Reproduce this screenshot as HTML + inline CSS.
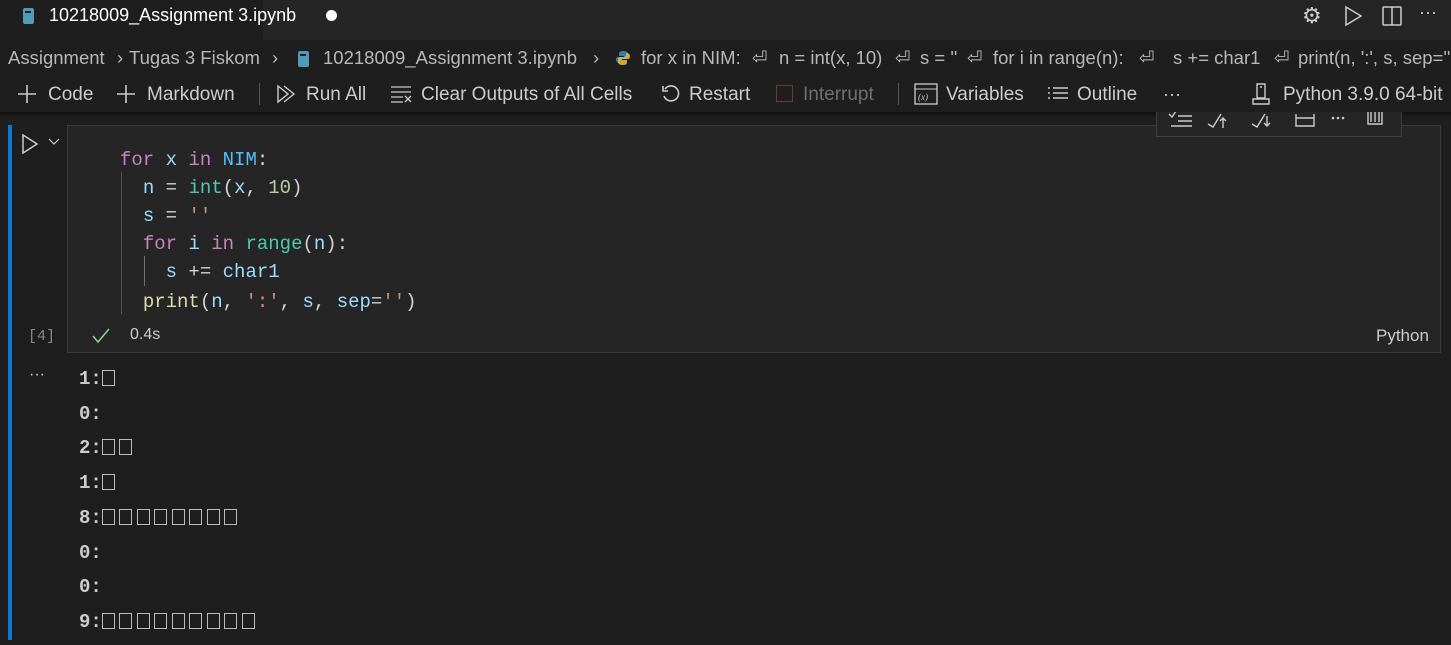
<!DOCTYPE html>
<html><head><meta charset="utf-8"><style>
*{margin:0;padding:0;box-sizing:border-box}
body{width:1451px;height:645px;background:#1e1e1e;overflow:hidden;position:relative;font-family:"Liberation Sans",sans-serif;color:#ccc}
.a{position:absolute;white-space:nowrap}
.ui{font-size:18px;color:#cccccc}
.bc{position:absolute;white-space:nowrap;top:47px;font-size:18.5px;color:#b8b8b8}
.mono{font-family:"Liberation Mono",monospace;font-size:19px}
.k{color:#c586c0}.v{color:#9cdcfe}.c{color:#4fc1ff}.f{color:#4ec9b0}.n{color:#b5cea8}.s{color:#ce9178}.y{color:#dcdcaa}.w{color:#d4d4d4}
.bx{display:inline-block;width:13px;height:16px;border:1.5px solid #bbb;margin-right:4.5px;vertical-align:-2px}
</style></head><body>
<div class="a" style="left:0;top:0;width:1451px;height:40px;background:#252526"></div>
<div class="a" style="left:0;top:0;width:263px;height:40px;background:#1e1e1e"></div>
<svg class="a" style="left:22px;top:7px" width="14" height="18"><rect x="1" y="1" width="11" height="16" rx="2" fill="#519aba"/><rect x="3" y="4" width="6" height="2" fill="#1e1e1e"/></svg>
<div class="a ui" style="left:49px;top:5px;color:#fff">10218009_Assignment 3.ipynb</div>
<div class="a" style="left:326px;top:10px;width:11px;height:11px;border-radius:50%;background:#fff"></div>
<div class="a" style="left:1302px;top:3px;font-size:22px;color:#ccc">⚙</div>
<svg class="a" style="left:1342px;top:5px" width="22" height="22"><path d="M4 2 L19 11 L4 20 Z" fill="none" stroke="#ccc" stroke-width="1.5"/></svg>
<svg class="a" style="left:1381px;top:5px" width="22" height="22"><rect x="2" y="2" width="18" height="18" rx="1" fill="none" stroke="#ccc" stroke-width="1.5"/><line x1="11" y1="2" x2="11" y2="20" stroke="#ccc" stroke-width="1.5"/></svg>
<div class="a ui" style="left:1419px;top:2px;font-size:18px">···</div>
<div class="bc" style="left:8px">Assignment</div>
<div class="bc" style="left:117px">›</div>
<div class="bc" style="left:129px">Tugas 3 Fiskom</div>
<div class="bc" style="left:272px">›</div>
<svg class="a" style="left:297px;top:50px" width="14" height="18"><rect x="1" y="1" width="11" height="16" rx="2" fill="#519aba"/><rect x="3" y="4" width="6" height="2" fill="#1e1e1e"/></svg>
<div class="bc" style="left:323px">10218009_Assignment 3.ipynb</div>
<div class="bc" style="left:593px">›</div>
<svg class="a" style="left:615px;top:50px" width="16" height="16"><path d="M8 1C4 1 4 3 4 4v2h5v1H3C1 7 1 9 1 10s1 3 3 3h1v-2c0-1 1-2 2-2h4c1 0 2-1 2-2V4c0-2-2-3-5-3z" fill="#3a78b0"/><path d="M8 15c4 0 4-2 4-3v-2H7V9h6c2 0 2-2 2-3s-1-3-3-3h-1v2c0 1-1 2-2 2H5c-1 0-2 1-2 2v3c0 2 2 3 5 3z" fill="#d8b84a" opacity=".9"/></svg>
<div class="bc" style="left:641px">for x in NIM:</div>
<div class="bc" style="left:752px">⏎</div>
<div class="bc" style="left:779px">n = int(x, 10)</div>
<div class="bc" style="left:895px">⏎</div>
<div class="bc" style="left:920px">s = ''</div>
<div class="bc" style="left:967px">⏎</div>
<div class="bc" style="left:993px">for i in range(n):</div>
<div class="bc" style="left:1139px">⏎</div>
<div class="bc" style="left:1173px">s += char1</div>
<div class="bc" style="left:1274px">⏎</div>
<div class="bc" style="left:1298px">print(n, ':', s, sep=''</div>
<div class="a" style="left:0;top:112px;width:1451px;height:6px;background:linear-gradient(#111,#1e1e1e)"></div>
<svg class="a" style="left:17px;top:84px" width="20" height="20"><path d="M10 1v18M1 10h18" stroke="#ccc" stroke-width="1.6"/></svg>
<div class="a ui" style="left:48px;top:84px;font-size:19px">Code</div>
<svg class="a" style="left:116px;top:84px" width="20" height="20"><path d="M10 1v18M1 10h18" stroke="#ccc" stroke-width="1.6"/></svg>
<div class="a ui" style="left:147px;top:84px;font-size:19px">Markdown</div>
<div class="a" style="left:259px;top:83px;width:1px;height:22px;background:#555"></div>
<svg class="a" style="left:276px;top:84px" width="22" height="20"><path d="M2 2L12 10L2 18Z M8 2L18 10L8 18" fill="none" stroke="#ccc" stroke-width="1.4"/></svg>
<div class="a ui" style="left:306px;top:84px;font-size:19px">Run All</div>
<svg class="a" style="left:390px;top:85px" width="24" height="18"><path d="M1 2h20M1 7h20M1 12h12M1 17h12M15 11l6 6M21 11l-6 6" stroke="#ccc" stroke-width="1.3"/></svg>
<div class="a ui" style="left:421px;top:84px;font-size:19px">Clear Outputs of All Cells</div>
<svg class="a" style="left:661px;top:84px" width="20" height="20"><path d="M4 5A7.5 7.5 0 1 1 3 12" fill="none" stroke="#ccc" stroke-width="1.6"/><path d="M2 2v5h5" fill="none" stroke="#ccc" stroke-width="1.6"/></svg>
<div class="a ui" style="left:689px;top:84px;font-size:19px">Restart</div>
<div class="a" style="left:776px;top:85px;width:17px;height:17px;border:1.5px solid #6b3a3a"></div>
<div class="a ui" style="left:803px;top:84px;color:#6f6f6f;font-size:19px">Interrupt</div>
<div class="a" style="left:898px;top:83px;width:1px;height:22px;background:#555"></div>
<svg class="a" style="left:914px;top:83px" width="24" height="22"><rect x="1" y="1" width="22" height="20" fill="none" stroke="#ccc" stroke-width="1.3"/><line x1="1" y1="6" x2="23" y2="6" stroke="#ccc"/><text x="4" y="17" font-size="9" fill="#ccc" font-family="Liberation Serif" font-style="italic">(x)</text></svg>
<div class="a ui" style="left:946px;top:84px;font-size:19px">Variables</div>
<svg class="a" style="left:1047px;top:86px" width="22" height="16"><path d="M1 2h2M6 2h15M1 7h2M6 7h15M1 12h2M6 12h15" stroke="#ccc" stroke-width="1.5"/></svg>
<div class="a ui" style="left:1077px;top:84px;font-size:19px">Outline</div>
<div class="a ui" style="left:1163px;top:84px">···</div>
<svg class="a" style="left:1250px;top:82px" width="22" height="24"><path d="M7 2h8v14H7z M3 17h16v5H3z M10 5h2" fill="none" stroke="#ccc" stroke-width="1.4"/></svg>
<div class="a ui" style="left:1283px;top:84px;font-size:19px">Python 3.9.0 64-bit</div>
<div class="a" style="left:8px;top:125px;width:4px;height:515px;background:#0a7ad3"></div>
<div class="a" style="left:67px;top:125px;width:1374px;height:228px;background:#252526;border:1px solid #3a3a3a"></div>
<svg class="a" style="left:20px;top:133px" width="20" height="22"><path d="M3 2L17 11L3 20Z" fill="none" stroke="#ccc" stroke-width="1.5"/></svg>
<svg class="a" style="left:48px;top:137px" width="12" height="10"><path d="M1 2l5 5 5-5" fill="none" stroke="#ccc" stroke-width="1.2"/></svg>
<div class="a" style="left:1156px;top:112px;width:246px;height:25px;background:#252526;border:1px solid #3f3f3f;border-top:none"></div>
<svg class="a" style="left:1156px;top:112px" width="246" height="20">
<g fill="none" stroke="#ccc" stroke-width="1.4">
<path d="M13 2l3 3 4-6M22 4h14M22 9h14M15 14h21"/>
<path d="M52 12l5 3 8-13M67 6v10M64 9l3-3 3 3"/>
<path d="M96 12l5 3 8-13M111 4v10M108 11l3 3 3-3"/>
<path d="M140 2v12h18V2M140 6h18"/>
<path d="M212 -1v13h14V-1M215 0v10M219 0v10M223 0v10"/>
</g>
<g fill="#ccc"><circle cx="177" cy="6" r="1.3"/><circle cx="182" cy="6" r="1.3"/><circle cx="187" cy="6" r="1.3"/></g>
</svg>
<div class="a" style="left:121px;top:172px;width:1px;height:142px;background:#555"></div>
<div class="a" style="left:144px;top:256px;width:1px;height:30px;background:#707070"></div>
<div class="a mono" style="left:120px;top:146px;line-height:28px">
<div><span class="k">for</span> <span class="v">x</span> <span class="k">in</span> <span class="c">NIM</span><span class="w">:</span></div>
<div>&nbsp;&nbsp;<span class="v">n</span> <span class="w">=</span> <span class="f">int</span><span class="w">(</span><span class="v">x</span><span class="w">, </span><span class="n">10</span><span class="w">)</span></div>
<div>&nbsp;&nbsp;<span class="v">s</span> <span class="w">=</span> <span class="s">''</span></div>
<div>&nbsp;&nbsp;<span class="k">for</span> <span class="v">i</span> <span class="k">in</span> <span class="f">range</span><span class="w">(</span><span class="v">n</span><span class="w">):</span></div>
<div>&nbsp;&nbsp;&nbsp;&nbsp;<span class="v">s</span> <span class="w">+=</span> <span class="v">char1</span></div>
<div style="margin-top:2px">&nbsp;&nbsp;<span class="y">print</span><span class="w">(</span><span class="v">n</span><span class="w">, </span><span class="s">':'</span><span class="w">, </span><span class="v">s</span><span class="w">, </span><span class="v">sep</span><span class="w">=</span><span class="s">''</span><span class="w">)</span></div>
</div>
<div class="a" style="left:28px;top:328px;font-size:15px;color:#888;font-family:'Liberation Mono',monospace">[4]</div>
<svg class="a" style="left:92px;top:328px" width="18" height="16"><path d="M1 8l5 6L17 1" fill="none" stroke="#89d185" stroke-width="1.6"/></svg>
<div class="a" style="left:130px;top:326px;font-size:16px;color:#ccc">0.4s</div>
<div class="a" style="left:1376px;top:326px;font-size:17px;color:#ccc">Python</div>
<div class="a" style="left:29px;top:366px;font-size:16px;color:#ccc">···</div>
<div class="a" style="left:79px;top:362px;font-family:'Liberation Mono',monospace;font-size:19px;font-weight:bold;color:#ccc;line-height:34.7px">
<div>1:<span class="bx"></span></div>
<div>0:</div>
<div>2:<span class="bx"></span><span class="bx"></span></div>
<div>1:<span class="bx"></span></div>
<div>8:<span class="bx"></span><span class="bx"></span><span class="bx"></span><span class="bx"></span><span class="bx"></span><span class="bx"></span><span class="bx"></span><span class="bx"></span></div>
<div>0:</div>
<div>0:</div>
<div>9:<span class="bx"></span><span class="bx"></span><span class="bx"></span><span class="bx"></span><span class="bx"></span><span class="bx"></span><span class="bx"></span><span class="bx"></span><span class="bx"></span></div>
</div>
</body></html>
